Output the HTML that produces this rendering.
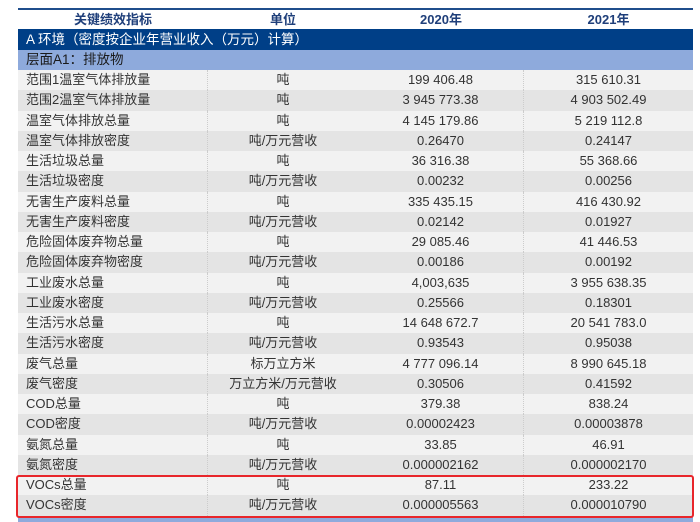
<!DOCTYPE html>
<html><head><meta charset="utf-8"><style>
body{margin:0;width:700px;height:520px;background:#fff;overflow:hidden;font-family:"Liberation Sans","Noto Sans CJK SC",sans-serif;position:relative}
.t{position:absolute;left:18px;top:8px;width:675px;border-top:2px solid #1f4e8c}
.r{height:20.25px;display:flex;font-size:13px;color:#333;line-height:20.25px}
.r div{box-sizing:border-box;white-space:nowrap;overflow:hidden}
.c1{width:190px;padding-left:8px}.c2{width:150px;text-align:center}.c3{width:166px;text-align:center}.c4{width:169px;text-align:center}
.h{color:#1f3f7a;font-weight:bold;height:19px;line-height:19px;background:#fff}
.a{background:#003f87;color:#fff;height:21px;line-height:21px;padding-left:8px;font-size:13.5px}
.b{background:#8eaadc;color:#1a1a1a;height:20px;line-height:20px;padding-left:8px;font-size:13.5px}
.o{background:#f2f2f2}.e{background:#e4e4e4}
.r .c1,.r .c3{border-right:1px dotted #ccc}
.h div{border:none!important}
.box{position:absolute;left:16px;top:475px;width:674px;height:39px;border:2px solid #e8262b;border-radius:3px}
.foot{position:absolute;left:18px;top:516px;width:675px;height:6px;background:#8eaadc}
</style></head><body>
<div class="t">
<div class="r h"><div class="c1" style="text-align:center;padding:0">关键绩效指标</div><div class="c2">单位</div><div class="c3">2020年</div><div class="c4">2021年</div></div>
<div class="a">A 环境（密度按企业年营业收入（万元）计算）</div>
<div class="b">层面A1：排放物</div>
<div class="r o"><div class="c1">范围1温室气体排放量</div><div class="c2">吨</div><div class="c3">199 406.48</div><div class="c4">315 610.31</div></div>
<div class="r e"><div class="c1">范围2温室气体排放量</div><div class="c2">吨</div><div class="c3">3 945 773.38</div><div class="c4">4 903 502.49</div></div>
<div class="r o"><div class="c1">温室气体排放总量</div><div class="c2">吨</div><div class="c3">4 145 179.86</div><div class="c4">5 219 112.8</div></div>
<div class="r e"><div class="c1">温室气体排放密度</div><div class="c2">吨/万元营收</div><div class="c3">0.26470</div><div class="c4">0.24147</div></div>
<div class="r o"><div class="c1">生活垃圾总量</div><div class="c2">吨</div><div class="c3">36 316.38</div><div class="c4">55 368.66</div></div>
<div class="r e"><div class="c1">生活垃圾密度</div><div class="c2">吨/万元营收</div><div class="c3">0.00232</div><div class="c4">0.00256</div></div>
<div class="r o"><div class="c1">无害生产废料总量</div><div class="c2">吨</div><div class="c3">335 435.15</div><div class="c4">416 430.92</div></div>
<div class="r e"><div class="c1">无害生产废料密度</div><div class="c2">吨/万元营收</div><div class="c3">0.02142</div><div class="c4">0.01927</div></div>
<div class="r o"><div class="c1">危险固体废弃物总量</div><div class="c2">吨</div><div class="c3">29 085.46</div><div class="c4">41 446.53</div></div>
<div class="r e"><div class="c1">危险固体废弃物密度</div><div class="c2">吨/万元营收</div><div class="c3">0.00186</div><div class="c4">0.00192</div></div>
<div class="r o"><div class="c1">工业废水总量</div><div class="c2">吨</div><div class="c3">4,003,635</div><div class="c4">3 955 638.35</div></div>
<div class="r e"><div class="c1">工业废水密度</div><div class="c2">吨/万元营收</div><div class="c3">0.25566</div><div class="c4">0.18301</div></div>
<div class="r o"><div class="c1">生活污水总量</div><div class="c2">吨</div><div class="c3">14 648 672.7</div><div class="c4">20 541 783.0</div></div>
<div class="r e"><div class="c1">生活污水密度</div><div class="c2">吨/万元营收</div><div class="c3">0.93543</div><div class="c4">0.95038</div></div>
<div class="r o"><div class="c1">废气总量</div><div class="c2">标万立方米</div><div class="c3">4 777 096.14</div><div class="c4">8 990 645.18</div></div>
<div class="r e"><div class="c1">废气密度</div><div class="c2">万立方米/万元营收</div><div class="c3">0.30506</div><div class="c4">0.41592</div></div>
<div class="r o"><div class="c1">COD总量</div><div class="c2">吨</div><div class="c3">379.38</div><div class="c4">838.24</div></div>
<div class="r e"><div class="c1">COD密度</div><div class="c2">吨/万元营收</div><div class="c3">0.00002423</div><div class="c4">0.00003878</div></div>
<div class="r o"><div class="c1">氨氮总量</div><div class="c2">吨</div><div class="c3">33.85</div><div class="c4">46.91</div></div>
<div class="r e"><div class="c1">氨氮密度</div><div class="c2">吨/万元营收</div><div class="c3">0.000002162</div><div class="c4">0.000002170</div></div>
<div class="r o"><div class="c1">VOCs总量</div><div class="c2">吨</div><div class="c3">87.11</div><div class="c4">233.22</div></div>
<div class="r e"><div class="c1">VOCs密度</div><div class="c2">吨/万元营收</div><div class="c3">0.000005563</div><div class="c4">0.000010790</div></div>
</div>
<div class="foot"></div>
<div class="box"></div>
</body></html>
